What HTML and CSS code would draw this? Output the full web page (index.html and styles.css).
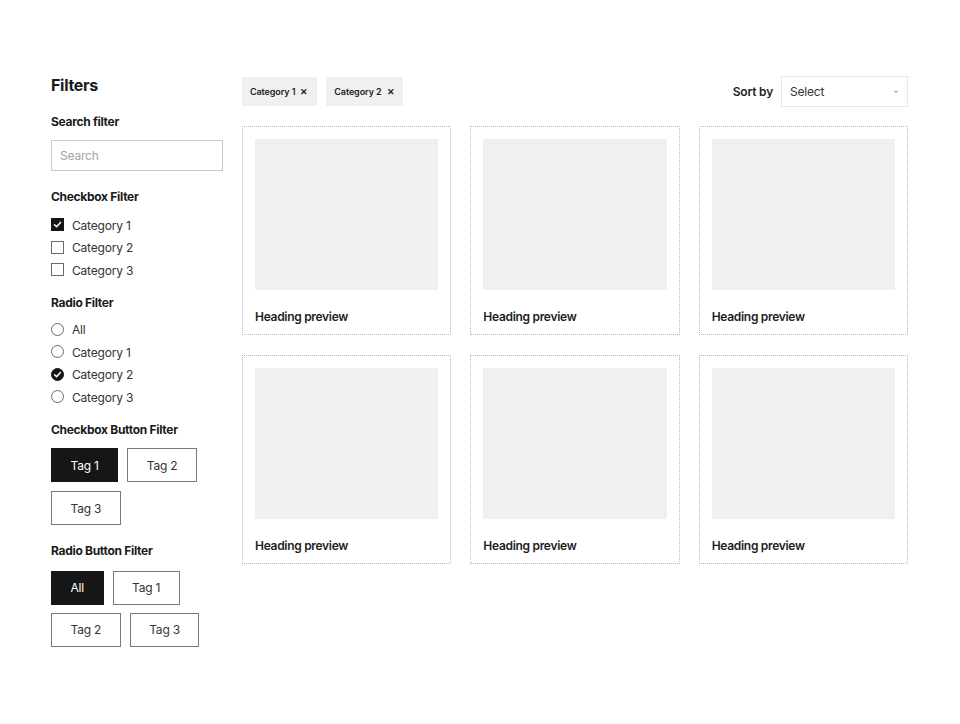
FILE: index.html
```html
<!DOCTYPE html>
<html lang="en">
<head>
<meta charset="utf-8">
<title>Filters</title>
<link rel="stylesheet" href="styles.css">
</head>
<body>
<div class="page">
  <aside class="sidebar">
    <h1 class="sidebar-title">Filters</h1>

    <section class="filter">
      <h2 class="filter-title">Search filter</h2>
      <input class="search" type="text" placeholder="Search">
    </section>

    <section class="filter">
      <h2 class="filter-title">Checkbox Filter</h2>
      <ul class="option-list">
        <li class="option"><span class="box box-checked"><svg viewBox="0 0 13 13" width="13" height="13"><polyline points="3.5,6.8 5.6,8.8 9.5,4.4" fill="none" stroke="#fff" stroke-width="1.5" stroke-linecap="round" stroke-linejoin="round"/></svg></span>Category 1</li>
        <li class="option"><span class="box"></span>Category 2</li>
        <li class="option"><span class="box"></span>Category 3</li>
      </ul>
    </section>

    <section class="filter">
      <h2 class="filter-title">Radio Filter</h2>
      <ul class="option-list option-list-radio">
        <li class="option"><span class="radio"></span>All</li>
        <li class="option"><span class="radio"></span>Category 1</li>
        <li class="option"><span class="radio radio-checked"><svg viewBox="0 0 13 13" width="13" height="13"><polyline points="3.6,6.8 5.6,8.7 9.4,4.6" fill="none" stroke="#fff" stroke-width="1.5" stroke-linecap="round" stroke-linejoin="round"/></svg></span>Category 2</li>
        <li class="option"><span class="radio"></span>Category 3</li>
      </ul>
    </section>

    <section class="filter">
      <h2 class="filter-title filter-title-btn">Checkbox Button Filter</h2>
      <div class="tag-group">
        <span class="tag tag-active">Tag 1</span>
        <span class="tag">Tag 2</span>
        <span class="tag">Tag 3</span>
      </div>
    </section>

    <section class="filter">
      <h2 class="filter-title filter-title-btn2">Radio Button Filter</h2>
      <div class="tag-group tag-group-tight">
        <span class="tag tag-active">All</span>
        <span class="tag">Tag 1</span>
        <span class="tag">Tag 2</span>
        <span class="tag">Tag 3</span>
      </div>
    </section>
  </aside>

  <main class="content">
    <div class="toolbar">
      <div class="chips">
        <span class="chip">Category 1 <span class="chip-x">✕</span></span>
        <span class="chip">Category 2 <span class="chip-x">✕</span></span>
      </div>
      <div class="sort">
        <span class="sort-label">Sort by</span>
        <div class="select"><span>Select</span><span class="caret"></span></div>
      </div>
    </div>

    <div class="grid">
      <div class="card"><div class="card-img"></div><h3 class="card-title">Heading preview</h3></div>
      <div class="card"><div class="card-img"></div><h3 class="card-title">Heading preview</h3></div>
      <div class="card"><div class="card-img"></div><h3 class="card-title">Heading preview</h3></div>
      <div class="card"><div class="card-img"></div><h3 class="card-title">Heading preview</h3></div>
      <div class="card"><div class="card-img"></div><h3 class="card-title">Heading preview</h3></div>
      <div class="card"><div class="card-img"></div><h3 class="card-title">Heading preview</h3></div>
    </div>
  </main>
</div>
</body>
</html>
```

FILE: styles.css
```css
* { box-sizing: border-box; }

html, body {
  margin: 0;
  padding: 0;
  background: #fff;
}

body {
  font-family: Inter, "Noto Sans", "Liberation Sans", sans-serif;
  color: #1b1b1b;
}

.page {
  display: flex;
  gap: 19px;
  padding: 76px 52px 40px 51px;
}

.sidebar {
  width: 172px;
  flex: none;
  display: flex;
  flex-direction: column;
  gap: 18px;
}

.sidebar-title {
  margin: 0 0 1.5px;
  font-size: 16px;
  line-height: 18px;
  font-weight: 700;
  letter-spacing: -0.3px;
  color: #1a1a1a;
}

.filter {
  display: flex;
  flex-direction: column;
}

.filter-title {
  margin: 0 0 10.5px;
  font-size: 12px;
  line-height: 16px;
  font-weight: 700;
  letter-spacing: -0.3px;
  color: #1a1a1a;
}

.filter-title-btn { margin-bottom: 10.5px; }
.filter-title-btn2 { margin-bottom: 11.5px; }

.search {
  height: 31px;
  width: 100%;
  border: 1px solid #c9c9c9;
  padding: 0 8px;
  font-family: inherit;
  font-size: 12px;
  letter-spacing: -0.2px;
  color: #333;
  outline: none;
}
.search::placeholder { color: #a3a3a3; }

.option-list {
  list-style: none;
  margin: -1.5px 0 -5px;
  padding: 0;
}
.option-list-radio { margin-top: -3px; }

.option {
  display: flex;
  align-items: center;
  gap: 8px;
  height: 22.6px;
  font-size: 12px;
  letter-spacing: -0.2px;
  color: #333;
}

.box {
  width: 13px;
  height: 13px;
  border: 1px solid #6a6a6a;
  background: #fff;
  flex: none;
  display: flex;
  margin-top: -1px;
}
.box-checked {
  background: #141414;
  border-color: #141414;
}
.box svg, .radio svg { display: block; margin: -1px; }

.radio {
  width: 13px;
  height: 13px;
  border: 1px solid #6a6a6a;
  border-radius: 50%;
  background: #fff;
  flex: none;
  display: flex;
  margin-top: -1px;
}
.radio-checked {
  background: #141414;
  border-color: #141414;
}

.tag-group {
  display: flex;
  flex-wrap: wrap;
  gap: 9px;
}
.tag-group-tight { row-gap: 8px; }

.tag {
  height: 34px;
  padding: 0 18.5px;
  display: inline-flex;
  align-items: center;
  border: 1px solid #7a7a7a;
  font-size: 12px;
  letter-spacing: -0.2px;
  color: #333;
  background: #fff;
}
.tag-active {
  background: #161616;
  border-color: #161616;
  color: #fff;
}

.content {
  flex: 1;
  min-width: 0;
}

.toolbar {
  display: flex;
  align-items: center;
  justify-content: space-between;
  height: 31px;
  margin-bottom: 19px;
}

.chips {
  display: flex;
  gap: 9px;
}

.chip {
  height: 29px;
  display: inline-flex;
  align-items: center;
  gap: 5px;
  padding: 0 9px 0 8px;
  background: #f0f0f0;
  font-size: 9px;
  font-weight: 600;
  letter-spacing: -0.1px;
  color: #222;
}
.chip-x {
  font-size: 8.5px;
  font-weight: 700;
  color: #222;
}

.sort {
  display: flex;
  align-items: center;
  gap: 8px;
}

.sort-label {
  font-size: 12px;
  font-weight: 600;
  letter-spacing: -0.2px;
  color: #1e1e1e;
}

.select {
  width: 127px;
  height: 31px;
  border: 1px solid #e6e6e6;
  display: flex;
  align-items: center;
  justify-content: space-between;
  padding: 0 9px 0 8px;
  font-size: 12px;
  letter-spacing: -0.2px;
  color: #333;
}

.caret {
  width: 0;
  height: 0;
  border-left: 2px solid transparent;
  border-right: 2px solid transparent;
  border-top: 2px solid #999;
}

.grid {
  display: grid;
  grid-template-columns: repeat(3, 1fr);
  gap: 20px 19px;
}

.card {
  border: 1px dotted #b8b8b8;
  padding: 12px 12px 10px 12px;
  height: 209px;
}

.card-img {
  height: 151px;
  background: #f0f0f0;
}

.card-title {
  margin: 19px 0 0;
  font-size: 12px;
  line-height: 16px;
  font-weight: 600;
  letter-spacing: -0.3px;
  color: #1e1e1e;
}
```
